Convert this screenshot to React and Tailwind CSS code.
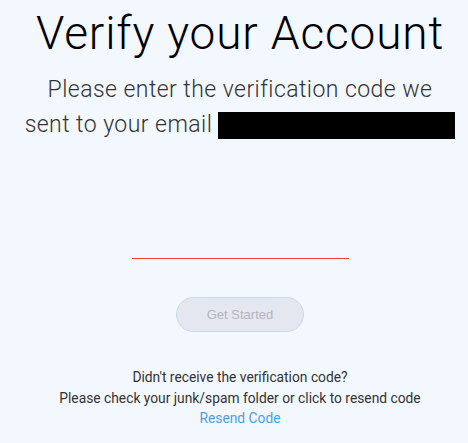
import React, { useState } from 'react';

export default function App() {
  const [code, setCode] = useState('');

  return (
    <div
      className="min-h-[443px] w-full bg-[#f3f7fe] pl-[12px] flex flex-col items-center"
      style={{ fontFamily: 'Roboto, "Liberation Sans", sans-serif' }}
    >
      <h1 className="mt-[6px] text-[46px] font-light leading-[54px] tracking-[0.85px] text-black">
        Verify your Account
      </h1>

      <p className="mt-[12px] w-[440px] text-center text-[23px] font-light leading-[35px] tracking-[0.45px] text-[#333]">
        Please enter the verification code we
        <br />
        sent to your email{' '}
        <span className="inline-block h-[27px] w-[237px] bg-black align-middle" />
      </p>

      <input
        value={code}
        onChange={(e) => setCode(e.target.value)}
        className="mt-[77px] h-[40px] w-[217px] border-0 border-b border-solid border-b-[#f44336] bg-transparent text-center text-lg outline-none"
      />

      <button
        type="button"
        disabled
        className="mt-[38px] h-[35px] w-[128px] rounded-full border border-[#c8d8ef] bg-[#e4e7ef] text-[13px] text-[#b3b6bd]"
        style={{ fontFamily: '"Liberation Sans", Arial, sans-serif' }}
      >
        Get Started
      </button>

      <div className="mt-[35px] flex flex-col items-center text-[13.8px] leading-[20.5px] text-[#333]">
        <span>Didn't receive the verification code?</span>
        <span>Please check your junk/spam folder or click to resend code</span>
        <a href="#" className="text-[#4a9fe8]">Resend Code</a>
      </div>
    </div>
  );
}
